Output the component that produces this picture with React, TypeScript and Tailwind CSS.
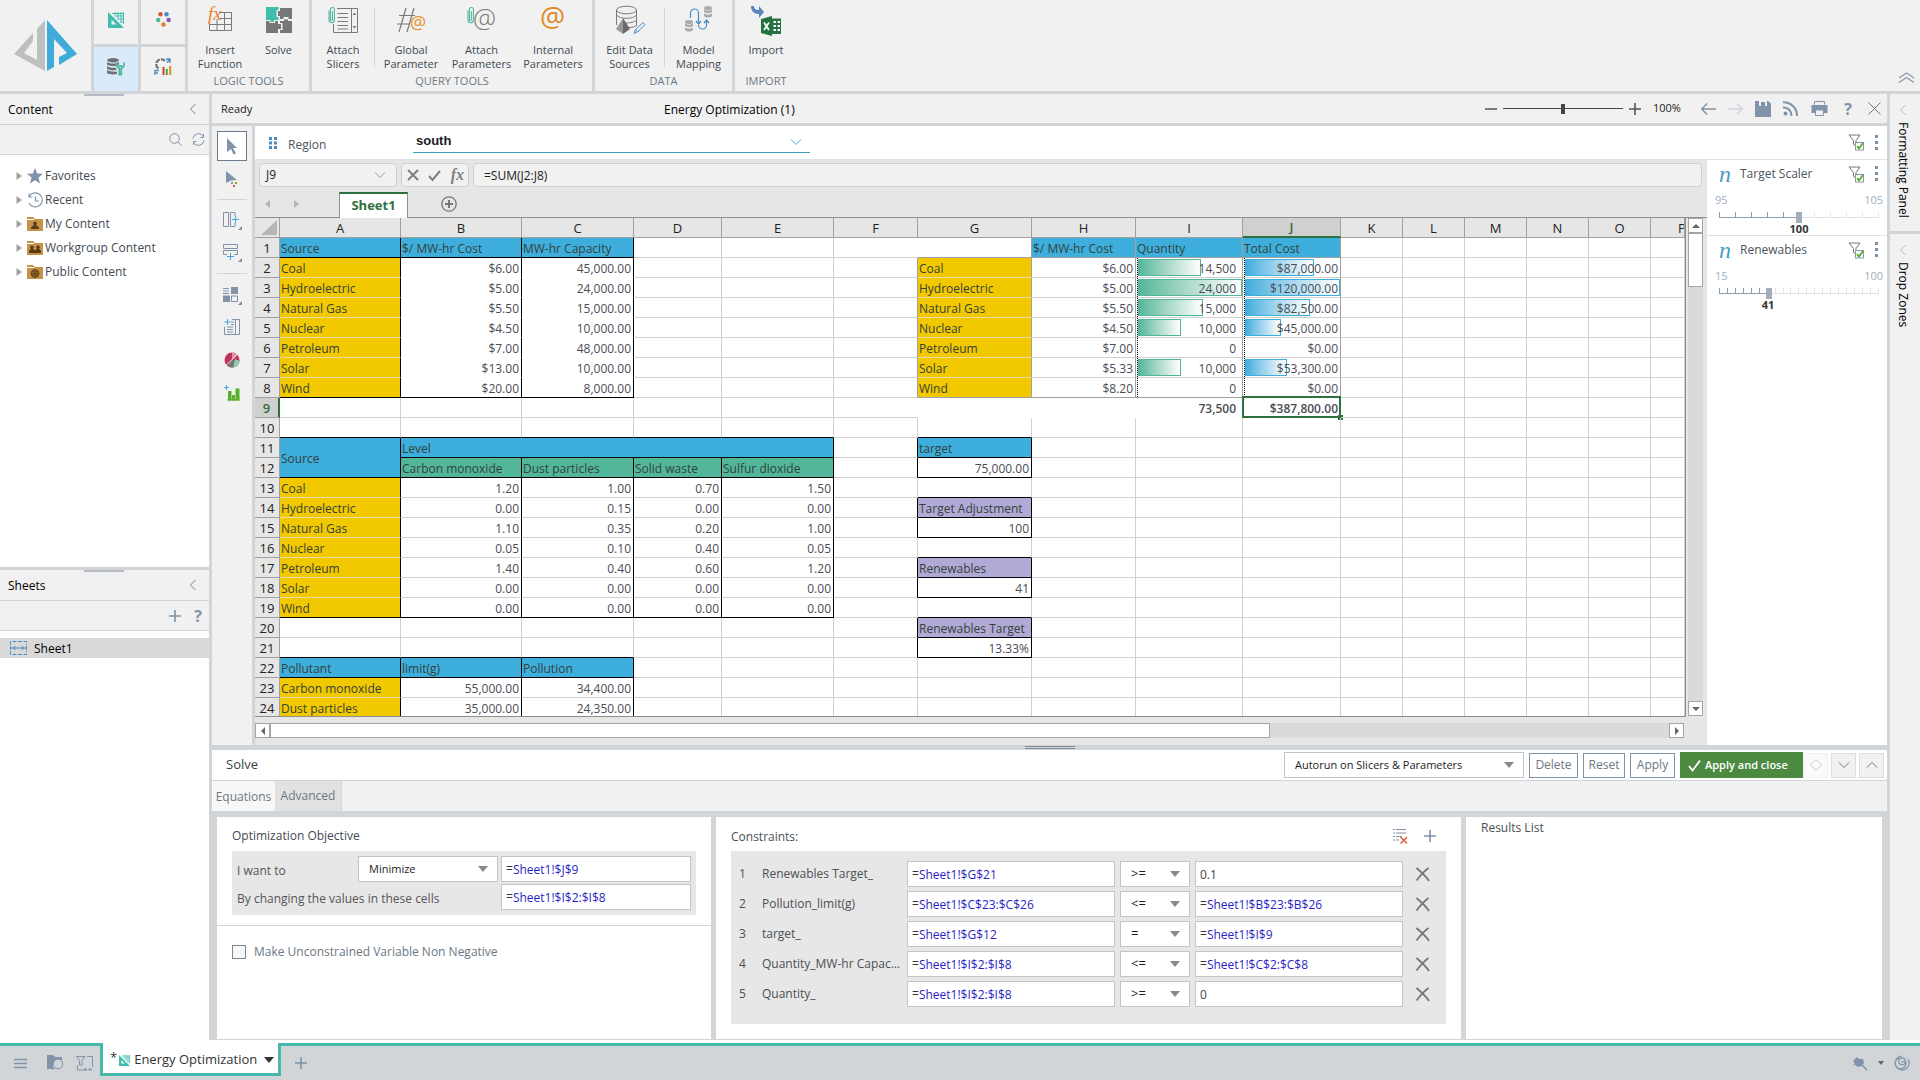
import React from "react";

const SEG = "font-['Open_Sans','Noto_Sans',sans-serif]";

/* ---------- icons ---------- */

type SvgProps = { w: number; h: number; vb?: string; className?: string; children: React.ReactNode };
function Svg({ w, h, vb, className, children }: SvgProps) {
  return (
    <svg width={w} height={h} viewBox={vb ?? `0 0 ${w} ${h}`} fill="none" className={`overflow-visible ${className ?? ""}`} aria-hidden="true">
      {children}
    </svg>
  );
}

const Logo = () => (
  <Svg w={64} h={52}>
    <path d="M31 0V51L0 34 19 13V21L10 33 23 40V9Z" fill="#bfbfbf" />
    <path d="M33 0 63 34 45 45V37L53 33 40 19V47L33 51Z" fill="#3fabdb" />
  </Svg>
);

const SetSquare = ({ s = 16 }: { s?: number }) => (
  <Svg w={s} h={s} vb="0 0 16 16">
    <path d="M0 0 16 16H0ZM3.5 7.500V12.500H8.500Z" fill="#41bdb0" fillRule="evenodd" />
    <path d="M4 1.500H16M6.500 4H16M9.500 7H16M12 10H16M7 0V3M10 0V7M13 0V10M15.500 0V12" stroke="#41bdb0" strokeWidth="1" />
  </Svg>
);

const Dots = () => (
  <Svg w={15} h={15}>
    <circle cx="4.500" cy="2.300" r="2.200" fill="#d9553a" />
    <circle cx="10.500" cy="2.300" r="2.200" fill="#4a8cc4" />
    <circle cx="2.200" cy="8" r="2.200" fill="#52b8a0" />
    <circle cx="12.600" cy="8" r="2.200" fill="#8655b5" />
    <circle cx="7.500" cy="12.500" r="2.200" fill="#d98327" />
  </Svg>
);

const DbWrench = () => (
  <Svg w={18} h={17}>
    <ellipse cx="6" cy="2.200" rx="6" ry="2.200" fill="#707070" />
    <path d="M0 4c3 2 9 2 12 0V6.500c-3 2-9 2-12 0ZM0 8c3 2 6 2 8.500 1.700l1 1.300V12c-3 .8-7 .5-9.500-1.200ZM0 12c2 1.500 7 2 10 1.500v2.500c-3 .8-8 .5-10-1Z" fill="#707070" />
    <path d="M9.500 4.500V8L12.300 10.500V16.500H14.300V10.500L17 8V4.500M11.500 8h3.600" stroke="#52b8a0" strokeWidth="1.800" />
  </Svg>
);

const ChartCycle = () => (
  <Svg w={18} h={17}>
    <path d="M4.500 10.500A5 5 0 1 1 11 3" stroke="#777" strokeWidth="2.200" strokeDasharray="5 1" />
    <path d="M12 1h4v4M16 1l-3 3.500M1 17v-4.500h4M1 15h3" stroke="#4a8cc4" strokeWidth="1.400" />
    <path d="M9.500 9v8" stroke="#c9452d" strokeWidth="2" />
    <path d="M12.800 11v6" stroke="#4aa84a" strokeWidth="2" />
    <path d="M16.200 8v9" stroke="#d98f27" strokeWidth="2" />
  </Svg>
);

const InsertFn = () => (
  <Svg w={28} h={28}>
    <path d="M13 6.500H25.500V24.500H3.500V15M3.500 18.500H25.500M14 12.500H25.500M11 13V24.500M18.500 6.500V24.500" stroke="#7a7a7a" />
    <text x="2" y="14" fontSize="19" fontStyle="italic" fontFamily="Liberation Serif, serif" fill="#e8842c">fx</text>
  </Svg>
);

const Puzzle = () => (
  <Svg w={26} h={26}>
    <path d="M14 1H26V12H22.500V10H17.500V12H14V9H12V4H14Z" fill="#777" />
    <path d="M0 14H3.500V16H9V14H12V17H15V22H12V26H0Z" fill="#777" />
    <path d="M14 14H18V12.500H22V14H26V26H14V23H16.500V16H14Z" fill="#777" />
    <path d="M0 0H12.500V3H10.500V10H12.500V13H8V15H4.500V13H0Z" fill="#41bdb0" />
  </Svg>
);

const Clip = () => (
  <path d="M1 4.500V14a2.700 2.700 0 0 0 5.400 0V3.500a2 2 0 0 0-4 0V13.500a1 1 0 0 0 2 0V5" stroke="#52b8a0" strokeWidth="1.100" />
);

const AttachSlicers = () => (
  <Svg w={30} h={28}>
    <path d="M9 2.500H29.500V26.500H5.500V18M23.500 2.500V26.500M9.500 7.500H20M9.500 11.500H20M9.500 15.500H20M9.500 19.500H20M9.500 23H20" stroke="#7a7a7a" />
    <path d="M24.500 9 26.500 6.500 28.500 9ZM24.500 20 26.500 22.500 28.500 20Z" fill="#7a7a7a" />
    <Clip />
  </Svg>
);

const HashAt = () => (
  <Svg w={30} h={28}>
    <path d="M10 2 3 26M18 2 11 26M3 9.500H19M1 18H14" stroke="#7a7a7a" strokeWidth="1.200" />
    <text x="14" y="23" fontSize="18" fontFamily="Open Sans, sans-serif" fill="#e8902c">@</text>
  </Svg>
);

const ClipAt = () => (
  <Svg w={30} h={28}>
    <text x="6" y="21" fontSize="26" fontFamily="Open Sans, sans-serif" fontWeight="300" fill="#7a7a7a">@</text>
    <Clip />
  </Svg>
);

const BigAt = () => (
  <Svg w={26} h={28}>
    <text x="0" y="21" fontSize="28" fontFamily="Open Sans, sans-serif" fill="#e08a1e">@</text>
  </Svg>
);

const EditSources = () => (
  <Svg w={30} h={30}>
    <ellipse cx="11.500" cy="5" rx="10" ry="3.800" stroke="#7a7a7a" />
    <path d="M1.500 5V20M21.500 5V21M1.500 10c3 4.500 17 4.500 20 0M10 18c5 0 10-1 11.500-3M13 22.500c4 0 7-.5 8.500-2" stroke="#7a7a7a" />
    <path d="M8 13 1 24l7 5Z" fill="#999" />
    <path d="M8 13v16l7-5Z" fill="#6a6a6a" />
    <path d="M19 28.500 20.500 24.500 28 17.500 30 19.500 22.500 27ZM20.500 24.500 22.500 27" stroke="#4a8cc4" />
  </Svg>
);

const Cyl = ({ x, y }: { x: number; y: number }) => (
  <g fill="#aaa" transform={`translate(${x} ${y})`}>
    <ellipse cx="4" cy="2" rx="4" ry="2" />
    <path d="M0 3.500c2 1.500 6 1.500 8 0V6c-2 1.500-6 1.500-8 0ZM0 7.500c2 1.500 6 1.500 8 0V10c-2 2-6 2-8 0Z" />
  </g>
);

const ModelMap = () => (
  <Svg w={28} h={28}>
    <Cyl x={19} y={0} />
    <Cyl x={0} y={14} />
    <path d="M5.500 12V7a4 4 0 0 1 8 0V19a4 4 0 0 0 8 0V14M11 15l2.500 3 2.500-3M19 17l2.500-3 2.500 3" stroke="#4a8cc4" strokeWidth="1.200" />
  </Svg>
);

const ExcelImport = () => (
  <Svg w={32} h={32}>
    <path d="M1 2c0 5 3 8 8 8v4l5-6-5-6v4C6 6 4 5 4 2Z" fill="#5b83bf" />
    <path d="M11 15 22 12V32L11 29Z" fill="#23713f" />
    <path d="M22 14.500H31V30H22Z" fill="#23713f" />
    <path d="M23.500 18H26M27.500 18H30M23.500 22H26M27.500 22H30M23.500 26H26M27.500 26H30" stroke="#fff" strokeWidth="1.800" />
    <path d="M14 18.500 19 26M19 18.500 14 26" stroke="#fff" strokeWidth="1.700" />
  </Svg>
);

const Chev = ({ d, s = 12, className = "" }: { d: "down" | "up" | "left"; s?: number; className?: string }) => (
  <Svg w={s} h={s} vb="0 0 12 12" className={className}>
    <path
      d={d === "down" ? "M1 3.500 6 8.500 11 3.500" : d === "up" ? "M1 8.500 6 3.500 11 8.500" : "M8.500 1 3.500 6 8.500 11"}
      stroke="currentColor"
    />
  </Svg>
);

const Caret = ({ className = "" }: { className?: string }) => (
  <Svg w={10} h={6} className={className}>
    <path d="M0 0H10L5 6Z" fill="currentColor" />
  </Svg>
);

const Plus = ({ s = 12 }: { s?: number }) => (
  <Svg w={s} h={s} vb="0 0 12 12">
    <path d="M6 0V12M0 6H12" stroke="currentColor" strokeWidth="1.600" />
  </Svg>
);

const FilterCheck = () => (
  <Svg w={17} h={17}>
    <path d="M1 1H12L8 6.500V12L5.500 10.500V6.500Z" stroke="#6d7780" />
    <rect x="7.500" y="8.500" width="8" height="7.500" fill="#fff" stroke="#8c9aa8" />
    <path d="M9 12 11 14.500 15 9" stroke="#53b024" strokeWidth="1.800" />
  </Svg>
);

const Kebab = () => (
  <Svg w={3} h={16}>
    <path d="M0 0H3V3H0ZM0 6H3V9H0ZM0 12H3V15H0Z" fill="#7d90a6" />
  </Svg>
);

const Folder = ({ kind }: { kind: "me" | "group" | "globe" }) => (
  <Svg w={16} h={14}>
    <path d="M0 0H6L8 2H16V14H0Z" fill="#c4924a" />
    <path d="M0 2.500H7" stroke="#fff" strokeWidth="1" />
    {kind === "me" && <path d="M8 4.500a2 2 0 0 1 1 3.600l3 2.400V12H4V10.500L7 8.100A2 2 0 0 1 8 4.500Z" fill="#5d3a14" />}
    {kind === "group" && (
      <path d="M5 4.500a1.800 1.800 0 0 1 1 3.300l2 1.700 2-1.700a1.800 1.800 0 1 1 2 0l2 2.200v2H2V10L4 7.800a1.800 1.800 0 0 1 1-3.300Z" fill="#5d3a14" />
    )}
    {kind === "globe" && (
      <>
        <circle cx="8" cy="8.500" r="4" fill="#9a6a2c" stroke="#5d3a14" strokeWidth=".8" />
        <path d="M4 8.500H12M8 4.500V12.500M5 6.200c2 1 4 1 6 0M5 10.800c2-1 4-1 6 0" stroke="#5d3a14" strokeWidth=".7" />
      </>
    )}
  </Svg>
);

const Star = () => (
  <Svg w={16} h={16}>
    <path d="M8 0 10.200 5.500 16 5.800 11.500 9.600 13 15.500 8 12.200 3 15.500 4.500 9.600 0 5.800 5.800 5.500Z" fill="#8093a8" />
  </Svg>
);

const Recent = () => (
  <Svg w={17} h={16}>
    <path d="M2.500 4A7 7 0 1 1 2 11M2 1.500V5H5.500M8.500 4.500V9H12" stroke="#8093a8" strokeWidth="1.200" />
  </Svg>
);

/* ---------- ribbon ---------- */

function RibbonButton({ icon, label, width }: { icon: React.ReactNode; label: string; width: string }) {
  return (
    <button className={`flex flex-col items-center pt-1 ${width}`}>
      <span className="flex h-8 items-center justify-center">{icon}</span>
      <span className="mt-[7px] w-min text-center text-[11px] leading-[14px] text-[#3f4a52]">{label}</span>
    </button>
  );
}

function RibbonGroup({ title, children, last }: { title: string; children: React.ReactNode; last?: boolean }) {
  return (
    <section className={`flex flex-col ${last ? "" : "border-r-[3px] border-[#d1d5d8]"}`}>
      <div className="flex h-[73px]">{children}</div>
      <h2 className="text-center text-[11px] leading-5 text-[#6b7883]">{title}</h2>
    </section>
  );
}

const Rule = () => <div className="mt-2 h-[59px] w-px bg-[#d1d5d8]" />;

function Ribbon() {
  return (
    <header className="flex h-[94px] border-b-[3px] border-[#d1d5d8] bg-[#f1f1f1]">
      <div className="flex w-[91px] items-center justify-center">
        <Logo />
      </div>
      <nav className="grid w-[97px] grid-cols-2 gap-[3px] bg-[#d1d5d8] px-[3px]" aria-label="Modules">
        <button className="flex items-center justify-center bg-[#f1f1f1] pb-1" aria-label="Formulate"><SetSquare /></button>
        <button className="flex items-center justify-center bg-[#f1f1f1] pb-1" aria-label="Discover"><Dots /></button>
        <button className="flex items-center justify-center bg-[#d9ebfb] pb-1" aria-label="Model"><DbWrench /></button>
        <button className="flex items-center justify-center bg-[#f1f1f1] pb-1" aria-label="Present"><ChartCycle /></button>
      </nav>
      <RibbonGroup title="LOGIC TOOLS">
        <RibbonButton icon={<InsertFn />} label="Insert Function" width="w-16" />
        <RibbonButton icon={<Puzzle />} label="Solve" width="mr-1 w-[53px]" />
      </RibbonGroup>
      <RibbonGroup title="QUERY TOOLS">
        <RibbonButton icon={<AttachSlicers />} label="Attach Slicers" width="w-[62px]" />
        <Rule />
        <RibbonButton icon={<HashAt />} label="Global Parameter" width="w-[72px]" />
        <RibbonButton icon={<ClipAt />} label="Attach Parameters" width="w-[69px]" />
        <RibbonButton icon={<BigAt />} label="Internal Parameters" width="mr-0.5 w-[74px]" />
      </RibbonGroup>
      <RibbonGroup title="DATA">
        <RibbonButton icon={<EditSources />} label="Edit&nbsp;Data Sources" width="w-[69px]" />
        <Rule />
        <RibbonButton icon={<ModelMap />} label="Model Mapping" width="w-[67px]" />
      </RibbonGroup>
      <RibbonGroup title="IMPORT" last>
        <RibbonButton icon={<ExcelImport />} label="Import" width="w-[62px]" />
      </RibbonGroup>
      <button className="ml-auto self-end px-1.5 pb-2 text-[#8c99a5]" aria-label="Collapse ribbon">
        <Svg w={15} h={11}>
          <path d="M0 6 7.500 1 15 6M0 10.500 7.500 5.500 15 10.500" stroke="currentColor" strokeWidth="1.300" />
        </Svg>
      </button>
    </header>
  );
}

/* ---------- left side ---------- */

function PanelHeader({ title }: { title: string }) {
  return (
    <div className="relative flex h-[31px] items-center justify-between border-b border-[#d1d5d8] bg-[#f1f1f1] pr-2.5 pl-2">
      <span className="absolute top-0 left-[84px] h-0.5 w-10 bg-[#b4bac0]" />
      <h2 className="pt-0.5 text-xs font-medium text-black">{title}</h2>
      <button aria-label={`Collapse ${title}`} className="text-[#7c868e]"><Chev d="left" /></button>
    </div>
  );
}

function TreeItem({ icon, label }: { icon: React.ReactNode; label: string }) {
  return (
    <li>
      <button className="flex h-6 items-center pl-4">
        <Svg w={6} h={8}><path d="M0.500 0 6 4 .5 8Z" fill="#a5a5a5" /></Svg>
        <span className="ml-[5px] flex w-[17px]">{icon}</span>
        <span className="ml-px text-xs text-[#3f4a52]">{label}</span>
      </button>
    </li>
  );
}

function LeftSide() {
  return (
    <aside className="flex w-[212px] shrink-0 flex-col border-r-[3px] border-[#d1d5d8] bg-white">
      <section className="flex flex-1 flex-col border-b-[3px] border-[#d1d5d8]">
        <PanelHeader title="Content" />
        <div className="flex h-[30px] items-center justify-end gap-2.5 border-b border-[#d1d5d8] bg-[#f1f1f1] pr-1 text-[#8093a8]">
          <button aria-label="Search">
            <Svg w={13} h={13}><circle cx="5.500" cy="5.500" r="4.800" stroke="currentColor" /><path d="M9 9 12.500 12.500" stroke="currentColor" /></Svg>
          </button>
          <button aria-label="Refresh">
            <Svg w={13} h={13}>
              <path d="M1 5.500A5.500 5.500 0 0 1 11.500 4M12 7.500A5.500 5.500 0 0 1 1.500 9M11.500 1V4.500H8.500M1.500 12V8.500H4.500" stroke="currentColor" />
            </Svg>
          </button>
        </div>
        <ul className="pt-[9px]">
          <TreeItem icon={<Star />} label="Favorites" />
          <TreeItem icon={<Recent />} label="Recent" />
          <TreeItem icon={<Folder kind="me" />} label="My Content" />
          <TreeItem icon={<Folder kind="group" />} label="Workgroup Content" />
          <TreeItem icon={<Folder kind="globe" />} label="Public Content" />
        </ul>
      </section>
      <section className="h-[470px]">
        <PanelHeader title="Sheets" />
        <div className="flex h-[30px] items-center justify-end gap-3 border-b border-[#d1d5d8] bg-[#f1f1f1] pr-1.5 text-[#8093a8]">
          <button aria-label="Add sheet"><Plus /></button>
          <button aria-label="Help" className="w-2.5 text-base leading-5 font-bold">?</button>
        </div>
        <button className="mt-[7px] flex h-5 w-full items-center bg-[#d9d9d9] pl-2.5">
          <Svg w={17} h={14}>
            <path d="M.5 4V.5H16.500V4M.5 10V13.500H16.500V10" stroke="#4a8cc4" strokeDasharray="4 1.500" />
            <path d="M1 7H16M5.500 5 3 7 5.500 9M11.500 5 14 7 11.500 9M.5 5V9M16.500 5V9" stroke="#4a8cc4" />
          </Svg>
          <span className="ml-[7px] pt-0.5 text-xs font-medium text-black">Sheet1</span>
        </button>
      </section>
    </aside>
  );
}

/* ---------- title bar ---------- */

function TitleBar() {
  return (
    <div className="flex h-8 items-center border-b-[3px] border-[#d1d5d8] bg-[#f1f1f1] pr-1.5 pl-[9px]">
      <span className="w-40 pt-px text-[11px] text-[#222]">Ready</span>
      <h1 className="flex-1 pt-0.5 pl-[283px] text-xs font-medium text-black">Energy Optimization (1)</h1>
      <div className="flex items-center text-[#555]">
        <button aria-label="Zoom out"><Svg w={12} h={2}><path d="M0 1H12" stroke="currentColor" strokeWidth="1.500" /></Svg></button>
        <input
          type="range"
          aria-label="Zoom"
          defaultValue={50}
          className="mx-1.5 h-3 w-[120px] appearance-none bg-[linear-gradient(#4a4a4a,#4a4a4a)] bg-[length:100%_1px] bg-center bg-no-repeat [&::-webkit-slider-thumb]:h-2.5 [&::-webkit-slider-thumb]:w-1 [&::-webkit-slider-thumb]:appearance-none [&::-webkit-slider-thumb]:bg-[#444]"
        />
        <button aria-label="Zoom in"><Plus /></button>
        <span className="ml-3 w-12 text-[11px] text-[#222]">100%</span>
      </div>
      <div className="flex items-center gap-3 text-[#8093a8]">
        <button aria-label="Undo">
          <Svg w={15} h={12}><path d="M6 .5.800 6 6 11.500M1 6H15" stroke="currentColor" strokeWidth="1.500" /></Svg>
        </button>
        <button aria-label="Redo" className="text-[#cfd6dd]">
          <Svg w={15} h={12}><path d="M9 .5 14.200 6 9 11.500M14 6H0" stroke="currentColor" strokeWidth="1.500" /></Svg>
        </button>
        <button aria-label="Save">
          <Svg w={16} h={16}>
            <path d="M0 0H13L16 2.500V16H0Z" fill="currentColor" />
            <path d="M4 0V5H6V1H10V5H12V0Z" fill="#f1f1f1" />
          </Svg>
        </button>
        <button aria-label="Publish">
          <Svg w={16} h={15}>
            <circle cx="2.500" cy="12.500" r="2" fill="currentColor" />
            <path d="M0 6.500A8 8 0 0 1 8.500 15M0 1.200A13.500 13.500 0 0 1 14 15" stroke="currentColor" strokeWidth="2" />
          </Svg>
        </button>
        <button aria-label="Print">
          <Svg w={17} h={15}>
            <path d="M3.500 3.500V.5H13.500V3.500" stroke="currentColor" />
            <path d="M.5 4H16.500V12H.5Z" fill="currentColor" />
            <path d="M4.500 9H12.500V14.500H4.500Z" fill="#f1f1f1" stroke="currentColor" />
          </Svg>
        </button>
        <button aria-label="Help" className="w-4 text-base leading-5 font-bold">?</button>
        <button aria-label="Close" className="text-[#6d7780]">
          <Svg w={13} h={13}><path d="M.5.500 12.500 12.500M12.500.500.500 12.500" stroke="currentColor" /></Svg>
        </button>
      </div>
    </div>
  );
}

/* ---------- tool strip ---------- */

const Corner = () => <path d="M19 14V18H15Z" fill="#7d90a6" />;

function ToolStrip() {
  return (
    <div className="flex w-[43px] shrink-0 flex-col items-center border-r-[3px] border-[#d1d5d8] bg-[#f1f1f1] pt-[5px] text-[#8093a8]">
      <button aria-label="Select" className="flex h-[30px] w-[30px] items-center justify-center border border-[#6b7b8a] bg-white">
        <Svg w={10} h={17}><path d="M0 0 10 10H6L9 15.500 6.500 16.500 4 11 0 14Z" fill="currentColor" /></Svg>
      </button>
      <button aria-label="Interact" className="flex h-9 items-center">
        <Svg w={12} h={17}>
          <path d="M0 0 11 9 5 9.500 0 12Z" fill="currentColor" />
          <path d="M5 11h2v2H5Z" fill="#52b8a0" /><path d="M9 11h2v2H9Z" fill="#d98327" />
          <path d="M7 14h2v2H7Z" fill="#d9553a" />
        </Svg>
      </button>
      <div className="my-0.5 h-px w-[30px] bg-[#cfd3d6]" />
      <button aria-label="Insert column" className="flex h-[34px] items-center pt-1">
        <Svg w={19} h={18}>
          <path d="M.5.500H5.500V14.500H.5ZM12 .5H7.500V14.500H12V11M12 .5V4" stroke="currentColor" />
          <path d="M12.500 4V11M9 7.500H16" stroke="#3fabdb" />
          <Corner />
        </Svg>
      </button>
      <button aria-label="Insert row" className="flex h-[33px] items-center">
        <Svg w={19} h={18}>
          <path d="M.5.500H14.500V4.500H.5ZM4 10.500H.5V6.500H14.500V10.500H11" stroke="currentColor" />
          <path d="M7.500 9V16M4 12.500H11" stroke="#3fabdb" />
          <Corner />
        </Svg>
      </button>
      <div className="mt-1 mb-0.5 h-px w-[30px] bg-[#cfd3d6]" />
      <button aria-label="Blocks" className="flex h-[35px] items-center pt-1">
        <Svg w={19} h={18}>
          <path d="M0 1.500H6M0 4H6M0 6.500H6" stroke="currentColor" />
          <path d="M8 0H15V7H8ZM0 8.500H7V15H0Z" fill="currentColor" />
          <path d="M8.500 9H14.500V14.500H8.500Z" stroke="currentColor" />
          <Corner />
        </Svg>
      </button>
      <button aria-label="Add slicer" className="flex h-8 items-center">
        <Svg w={16} h={16}>
          <path d="M8 .5H15.500V15.500H.5V8M11.500.500V15.500M3 8H9M3 10.500H9M3 13H9M7 3H10M7 5.500H10" stroke="currentColor" />
          <path d="M3.500 0V6M.5 3H6.500" stroke="#3fabdb" />
        </Svg>
      </button>
      <button aria-label="Pie" className="flex h-[33px] items-center">
        <Svg w={16} h={16}>
          <circle cx="8" cy="8" r="7.500" fill="#c2315c" />
          <path d="M8 8 15.500 8A7.500 7.500 0 0 1 3 13.500Z" fill="#777" />
          <path d="M8 8V.5A7.500 7.500 0 0 1 13.500 3Z" fill="#e58da6" />
          <path d="M1 14.500 14 1.500" stroke="#f1f1f1" />
          <path d="M11 7 15.500 9 13 15 9.500 14.500Z" fill="#8fd0b4" />
        </Svg>
      </button>
      <button aria-label="Chart" className="flex h-[34px] items-center">
        <Svg w={16} h={16}>
          <path d="M4 6H7.500V15.500H4ZM8 10H11V15.500H8ZM11.500 3.500H15.500V15.500H11.500Z" fill="#57b02a" />
          <path d="M3.500 14.800H15.500" stroke="#57b02a" strokeWidth="1.500" />
          <path d="M2.500 0V5M0 2.500H5" stroke="#3fabdb" />
        </Svg>
      </button>
    </div>
  );
}

/* ---------- spreadsheet ---------- */

type Cell = {
  t?: string; bg?: string; r?: string; b?: string; right?: boolean; bold?: boolean; cs?: number; rs?: number;
  bar?: number; color?: "green" | "blue"; skip?: boolean; indent?: boolean;
};

const COLS = "ABCDEFGHIJKLMNOP".split("");
const COLW = ["w-[121px]", "w-[121px]", "w-28", "w-[88px]", "w-28", "w-[84px]", "w-[114px]", "w-[104px]", "w-[107px]", "w-[98px]", "w-[62px]", "w-[62px]", "w-[62px]", "w-[62px]", "w-[62px]", ""];
const BLUE = "bg-[#3eaedd]";
const GOLD = "bg-[#f2c800]";
const TEAL = "bg-[#52b79a]";
const LILAC = "bg-[#b2aad6]";
const BK_R = "border-r-black";
const BK_B = "border-b-black";
const GR_R = "border-r-[#a0a0a0]";
const GR_B = "border-b-[#a0a0a0]";
const NO_R = "border-r-white";
const NO_B = "border-b-white";
const SOFT_B = "border-b-[#e3dcb0]";

const cells: Record<string, Cell> = {};
function put(cols: string, r1: number, r2: number, props: Cell) {
  for (const c of cols) for (let r = r1; r <= r2; r++) cells[c + r] = { ...cells[c + r], ...props };
}
function fill(col: string, row: number, values: string[], props: Cell = {}) {
  values.forEach((t, i) => put(col, row + i, row + i, { t, ...props }));
}

const SOURCES = ["Coal", "Hydroelectric", "Natural Gas", "Nuclear", "Petroleum", "Solar", "Wind"];

put("ABC", 1, 1, { bg: BLUE, r: BK_R, b: BK_B });
put("A", 2, 8, { bg: GOLD, r: BK_R, b: SOFT_B });
put("BC", 2, 8, { r: BK_R, b: NO_B, right: true });
put("ABC", 8, 8, { b: BK_B });
fill("A", 1, ["Source", ...SOURCES]);
fill("B", 1, ["$/ MW-hr Cost", "$6.00", "$5.00", "$5.50", "$4.50", "$7.00", "$13.00", "$20.00"]);
fill("C", 1, ["MW-hr Capacity", "45,000.00", "24,000.00", "15,000.00", "10,000.00", "48,000.00", "10,000.00", "8,000.00"]);

put("ABCDE", 10, 10, { b: BK_B });
put("A", 11, 11, { t: "Source", bg: BLUE, rs: 2, r: BK_R, b: BK_B });
put("A", 12, 12, { skip: true });
put("B", 11, 11, { t: "Level", bg: BLUE, cs: 4, r: BK_R, b: BK_B });
put("CDE", 11, 11, { skip: true });
put("BCDE", 12, 12, { bg: TEAL, r: BK_R, b: BK_B });
put("A", 13, 19, { bg: GOLD, r: BK_R, b: SOFT_B });
put("BCDE", 13, 19, { r: BK_R, right: true });
put("ABCDE", 19, 19, { b: BK_B });
fill("A", 13, SOURCES);
fill("B", 12, ["Carbon monoxide", "1.20", "0.00", "1.10", "0.05", "1.40", "0.00", "0.00"]);
fill("C", 12, ["Dust particles", "1.00", "0.15", "0.35", "0.10", "0.40", "0.00", "0.00"]);
fill("D", 12, ["Solid waste", "0.70", "0.00", "0.20", "0.40", "0.60", "0.00", "0.00"]);
fill("E", 12, ["Sulfur dioxide", "1.50", "0.00", "1.00", "0.05", "1.20", "0.00", "0.00"]);

put("ABC", 21, 21, { b: BK_B });
put("ABC", 22, 22, { bg: BLUE, r: BK_R, b: BK_B });
put("A", 23, 24, { bg: GOLD, r: BK_R, b: SOFT_B });
put("BC", 23, 24, { r: BK_R, right: true });
fill("A", 22, ["Pollutant", "Carbon monoxide", "Dust particles"]);
fill("B", 22, ["limit(g)", "55,000.00", "35,000.00"]);
fill("C", 22, ["Pollution", "34,400.00", "24,350.00"]);

put("F", 1, 1, { r: NO_R });
put("F", 2, 8, { r: GR_R });
put("F", 9, 9, { r: NO_R });
put("G", 1, 1, { r: GR_R, b: GR_B });
put("G", 2, 8, { bg: GOLD, r: GR_R, b: SOFT_B });
put("HIJ", 1, 1, { bg: BLUE, r: GR_R, b: GR_B });
put("HIJ", 2, 8, { r: GR_R, right: true });
put("GHI", 8, 8, { b: GR_B });
put("GHI", 9, 9, { r: NO_R, b: NO_B });
fill("G", 2, SOURCES);
fill("H", 1, ["$/ MW-hr Cost", "$6.00", "$5.00", "$5.50", "$4.50", "$7.00", "$5.33", "$8.20"]);
fill("I", 1, ["Quantity"]);
fill("J", 1, ["Total Cost"]);
fill("I", 2, ["14,500", "24,000", "15,000", "10,000", "0", "10,000", "0"], { indent: true, color: "green" });
fill("J", 2, ["$87,000.00", "$120,000.00", "$82,500.00", "$45,000.00", "$0.00", "$53,300.00", "$0.00"], { color: "blue" });
[14.5, 24, 15, 10, 0, 10, 0].forEach((v, i) => put("I", i + 2, i + 2, { bar: (v / 24) * 100 }));
[87, 120, 82.5, 45, 0, 53.3, 0].forEach((v, i) => put("J", i + 2, i + 2, { bar: (v / 120) * 100 }));
put("I", 9, 9, { t: "73,500", bold: true, right: true, indent: true });
put("J", 9, 9, { t: "$387,800.00", bold: true, right: true });

[[11, BLUE, "target", "75,000.00"], [14, LILAC, "Target Adjustment", "100"], [17, LILAC, "Renewables", "41"], [20, LILAC, "Renewables Target", "13.33%"]].forEach(
  ([row, bg, name, val]) => {
    const r = row as number;
    put("F", r, r + 1, { r: BK_R });
    put("G", r - 1, r - 1, { b: BK_B });
    put("G", r, r, { t: name as string, bg: bg as string, r: BK_R, b: BK_B });
    put("G", r + 1, r + 1, { t: val as string, r: BK_R, b: BK_B, right: true });
  },
);

function CellView({ id }: { id: string }) {
  const c = cells[id] ?? {};
  if (c.skip) return null;
  return (
    <td
      colSpan={c.cs}
      rowSpan={c.rs}
      className={`relative h-5 border-r border-b px-0 pt-0.5 pb-0 whitespace-nowrap ${c.bg ?? ""} ${c.r ?? "border-r-[#d0d0d0]"} ${c.b ?? "border-b-[#d0d0d0]"} ${c.right ? "text-right" : "text-left"} ${c.bold ? "font-semibold text-[#2d3046]" : ""} ${c.indent ? "pr-1.5" : "pr-0.5"} ${c.bg ? "pl-px text-[#33423a]" : "text-[#4a4d55]"}`}
    >
      {c.color && (
        <span className="absolute inset-y-0 right-0 left-px border-l border-dotted border-black py-px">
          {c.bar ? (
            <span
              className={`block h-[17px] border ${c.color === "green" ? "border-[#52b79a] bg-linear-to-r from-[#52b79a] to-white" : "border-[#3eaedd] bg-linear-to-r from-[#3eaedd] to-white"}`}
              style={{ width: `${c.bar}%` }}
            />
          ) : null}
        </span>
      )}
      <span className="relative">{c.t}</span>
      {id === "J9" && (
        <span className="absolute -inset-x-px -top-0.5 -bottom-px border-2 border-[#2e7040]">
          <span className="absolute -right-1 -bottom-1 h-[5px] w-[5px] bg-[#2e7040]" />
        </span>
      )}
    </td>
  );
}

function Grid() {
  return (
    <div className="min-h-0 flex-1 overflow-hidden border-r border-b border-[#8f8f8f] bg-white">
      <table className="w-full table-fixed border-separate border-spacing-0 text-xs leading-[17px]">
        <colgroup>
          <col className="w-[25px]" />
          {COLS.map((c, i) => <col key={c} className={COLW[i]} />)}
        </colgroup>
        <thead>
          <tr className="h-5 bg-[#e6e6e6] text-[13px] text-[#222]">
            <th className="border-r border-b border-[#a0a0a0] p-0">
              <Svg w={16} h={15} className="mr-0.5 ml-auto"><path d="M16 0V15H0Z" fill="#b5b5b5" /></Svg>
            </th>
            {COLS.map((c) => (
              <th
                key={c}
                scope="col"
                className={`h-5 overflow-hidden p-0 leading-[18px] ${c === "J" ? "border-r border-b-2 border-r-[#a0a0a0] border-b-[#2e7040] bg-[#d0d0d0] font-semibold text-[#2e7040]" : "border-r border-b border-[#a0a0a0] font-normal"}`}
              >
                {c === "P" ? <span className="block w-[62px]">P</span> : c}
              </th>
            ))}
          </tr>
        </thead>
        <tbody>
          {Array.from({ length: 24 }, (_, i) => i + 1).map((r) => (
            <tr key={r} className="h-5">
              <th
                scope="row"
                className={`h-5 p-0 text-center text-[13px] leading-[18px] ${r === 9 ? "border-r-2 border-b border-r-[#2e7040] border-b-[#a0a0a0] bg-[#d0d0d0] font-semibold text-[#2e7040]" : "border-r border-b border-[#a0a0a0] bg-[#e6e6e6] font-normal text-[#222]"}`}
              >
                {r}
              </th>
              {COLS.map((c) => <CellView key={c} id={c + r} />)}
            </tr>
          ))}
        </tbody>
      </table>
    </div>
  );
}

function Arrow({ d, label, className }: { d: string; label: string; className?: string }) {
  return (
    <button aria-label={label} className={`flex h-[15px] w-[15px] shrink-0 items-center justify-center border border-[#a5a5a5] bg-white ${className ?? ""}`}>
      <Svg w={8} h={8}><path d={d} fill="#666" /></Svg>
    </button>
  );
}

function Sheet() {
  return (
    <div className="flex min-w-0 flex-1 flex-col bg-[#e6e6e6] pb-[7px]">
      <div className="flex h-[27px] items-end gap-1 pr-[5px] pl-1 text-[#222]">
        <div className="flex h-6 w-[138px] items-center justify-between rounded-sm border border-[#d0d0d0] bg-[#f1f1f1] pr-2.5 pl-1.5 text-xs">
          J9
          <Chev d="down" className="text-[#999]" />
        </div>
        <div className="flex h-6 w-[68px] items-center justify-between rounded-sm border border-[#d0d0d0] bg-[#f1f1f1] px-1 text-[#808080]">
          <button aria-label="Cancel" className="pl-0.5"><Svg w={10} h={10}><path d="M0 0 10 10M10 0 0 10" stroke="currentColor" strokeWidth="2" /></Svg></button>
          <button aria-label="Enter"><Svg w={13} h={11}><path d="M1 6 4.500 10 12 1" stroke="currentColor" strokeWidth="2" /></Svg></button>
          <button aria-label="Function" className="font-['Liberation_Serif',serif] text-base leading-5 font-bold italic">fx</button>
        </div>
        <input
          aria-label="Formula"
          defaultValue="=SUM(J2:J8)"
          className="h-6 min-w-0 flex-1 rounded-sm border border-[#d0d0d0] bg-[#f1f1f1] px-2.5 text-xs"
        />
      </div>
      <div className="flex h-[31px] items-end border-b border-[#8f8f8f]">
        <div className="flex h-[26px] w-[84px] items-center gap-6 pl-2.5">
          <Svg w={5} h={8}><path d="M5 0V8L0 4Z" fill="#b5b5b5" /></Svg>
          <Svg w={5} h={8}><path d="M0 0V8L5 4Z" fill="#b5b5b5" /></Svg>
        </div>
        <button className="-mb-px h-[26px] w-[69px] border-x border-t-2 border-x-[#8f8f8f] border-t-[#2e7040] bg-white pb-0.5 text-[13px] leading-5 font-bold text-[#2e7040]">
          Sheet1
        </button>
        <button aria-label="New sheet" className="ml-[33px] pb-[5px] text-[#777]">
          <Svg w={16} h={16}><circle cx="8" cy="8" r="7.200" stroke="currentColor" strokeWidth="1.300" /><path d="M8 4V12M4 8H12" stroke="currentColor" strokeWidth="2" /></Svg>
        </button>
      </div>
      <div className="flex min-h-0 flex-1">
        <Grid />
        <div className="mr-1 mb-px ml-0.5 flex w-[15px] flex-col bg-[#dadada]">
          <Arrow label="Scroll up" d="M0 6 4 2 8 6Z" />
          <div className="h-[54px] border border-[#a5a5a5] bg-white" />
          <Arrow label="Scroll down" d="M0 2 4 6 8 2Z" className="mt-auto" />
        </div>
      </div>
      <div className="mt-1.5 mr-[23px] flex bg-[#dadada]">
        <Arrow label="Scroll left" d="M6 0 2 4 6 8Z" />
        <div className="h-[15px] w-[70%] border border-[#a5a5a5] bg-white" />
        <Arrow label="Scroll right" d="M2 0 6 4 2 8Z" className="ml-auto" />
      </div>
    </div>
  );
}

/* ---------- slicers ---------- */

function ParamSlider({ name, min, max, value, ticks, trail }: { name: string; min: number; max: number; value: number; ticks: number; trail?: boolean }) {
  const pct = ((value - min) / (max - min)) * 100;
  return (
    <section className={`h-[76px] pr-2 pl-3 ${trail ? "" : "border-b border-[#dfe2e5]"}`}>
      <div className="flex h-7 items-center">
        <span className="w-[21px] font-['Liberation_Serif',serif] text-2xl leading-5 text-[#4a9cc4] italic">n</span>
        <h3 className="flex-1 text-xs text-[#4a5560]">{name}</h3>
        <FilterCheck />
        <button aria-label={`${name} menu`} className="ml-2.5 pr-px"><Kebab /></button>
      </div>
      <div className="-mx-1 flex justify-between text-[11px] leading-6 text-[#a0afc0]">
        <span>{min}</span>
        <span>{max}</span>
      </div>
      <div className="relative h-[11px]">
        <div className="flex h-[5px] justify-between">
          {Array.from({ length: ticks }, (_, i) => (
            <span key={i} className={`w-px ${(i / (ticks - 1)) * 100 < pct ? "bg-[#8d9db0]" : "bg-[#dde2e8]"}`} />
          ))}
        </div>
        <div className="h-px bg-[#dde2e8]">
          <div className="h-px bg-[#8d9db0]" style={{ width: `${pct}%` }} />
        </div>
        <input
          type="range"
          aria-label={name}
          min={min}
          max={max}
          defaultValue={value}
          className="absolute inset-x-0 -top-px h-3 w-full appearance-none bg-transparent [&::-webkit-slider-thumb]:h-[11px] [&::-webkit-slider-thumb]:w-1.5 [&::-webkit-slider-thumb]:appearance-none [&::-webkit-slider-thumb]:bg-[#a3aebb]"
        />
      </div>
      <div style={{ marginLeft: `${pct}%` }}>
        <span className="block w-max -translate-x-1/2 text-[11px] leading-3 font-bold text-[#333]">{value}</span>
      </div>
    </section>
  );
}

/* ---------- solver ---------- */

function Field({ label, value, width }: { label: string; value: string; width: string }) {
  const formula = value.startsWith("=");
  return (
    <div className={`flex h-[26px] items-center border border-[#c2c5c8] bg-white pl-1 text-xs ${width}`}>
      {formula && <span className="text-[#333]">=</span>}
      <input
        aria-label={label}
        defaultValue={formula ? value.slice(1) : value}
        className={`h-full min-w-0 flex-1 bg-transparent outline-none ${formula ? "text-[#2a1fc4]" : "text-[#444]"}`}
      />
    </div>
  );
}

function Select({ label, value, options, className }: { label: string; value: string; options: string[]; className: string }) {
  return (
    <div className={`relative h-[26px] ${className}`}>
      <select
        aria-label={label}
        defaultValue={value}
        className="h-full w-full appearance-none border border-[#c2c5c8] bg-white pl-2.5 text-[#1c1c1c]"
      >
        {options.map((o) => <option key={o}>{o}</option>)}
      </select>
      <Caret className="pointer-events-none absolute top-2.5 right-2.5 text-[#8a8a8a]" />
    </div>
  );
}

const CONSTRAINTS = [
  ["Renewables Target_", "=Sheet1!$G$21", ">=", "0.1"],
  ["Pollution_limit(g)", "=Sheet1!$C$23:$C$26", "<=", "=Sheet1!$B$23:$B$26"],
  ["target_", "=Sheet1!$G$12", "=", "=Sheet1!$I$9"],
  ["Quantity_MW-hr Capacity", "=Sheet1!$I$2:$I$8", "<=", "=Sheet1!$C$2:$C$8"],
  ["Quantity_", "=Sheet1!$I$2:$I$8", ">=", "0"],
];

const OUTLINE = "h-[25px] border border-[#8093a8] bg-white text-xs text-[#6b7883]";

function Solver() {
  return (
    <section className="flex shrink-0 flex-col border-t-[5px] border-[#d1d5d8] bg-white">
      <div className="relative flex h-[31px] items-center border-b border-[#d1d5d8] pr-[3px] pl-3.5">
        <span className="absolute -top-1 left-1/2 h-[3px] w-[50px] -translate-x-1/2 border-y border-[#7c8a97]" />
        <h2 className="flex-1 text-[13px] text-[#3a3f44]">Solve</h2>
        <Select label="Run mode" value="Autorun on Slicers & Parameters" options={["Autorun on Slicers & Parameters", "Manual"]} className="w-[240px] text-[11px]" />
        <button className={`ml-[5px] w-[49px] ${OUTLINE}`}>Delete</button>
        <button className={`ml-[5px] w-[42px] ${OUTLINE}`}>Reset</button>
        <button className={`ml-[5px] w-[45px] ${OUTLINE}`}>Apply</button>
        <button className="ml-[5px] flex h-[26px] w-[123px] items-center gap-1 bg-[#4c8a41] pl-2 text-[11px] font-semibold text-white">
          <Svg w={13} h={13}><path d="M1 7 4.500 11.500 12 1.500" stroke="currentColor" strokeWidth="1.800" /></Svg>
          Apply and close
        </button>
        <button aria-label="Status" className="flex h-[25px] w-[25px] items-center justify-center border border-[#f0f0f0] bg-[#fafafa] text-[#c5c9cd]">
          <Svg w={12} h={12}><path d="M6 .5 11.500 6 6 11.500.500 6Z" stroke="currentColor" /></Svg>
        </button>
        <button aria-label="Next" className="ml-[3px] flex h-[25px] w-[25px] items-center justify-center border border-[#dcdfe1] bg-[#f1f1f1] text-[#6b7883]"><Chev d="down" /></button>
        <button aria-label="Previous" className="ml-[3px] flex h-[25px] w-[25px] items-center justify-center border border-[#dcdfe1] bg-[#f1f1f1] text-[#6b7883]"><Chev d="up" /></button>
      </div>
      <div className="flex h-[30px] bg-[#f1f1f1] text-xs text-[#6b7883]" role="tablist">
        <button role="tab" aria-selected="true" className="w-[63px] bg-[#f7f7f7] pt-0.5">Equations</button>
        <button role="tab" aria-selected="false" className="w-[67px] border-r border-[#d9d9d9] bg-[#e1e1e1]">Advanced</button>
      </div>
      <div className="grid h-[229px] grid-cols-[494fr_745fr_416fr] gap-[5px] border-b border-[#d1d5d8] bg-[#d1d5d8] px-[5px] pt-1.5">
        <div className="bg-white text-xs text-[#3f4a52]">
          <div className="border-b border-[#d1d5d8] px-[15px] pb-2.5">
            <h3 className="pt-1.5 pb-0.5 leading-[26px]">Optimization Objective</h3>
            <div className="flex flex-col gap-0.5 bg-[#e7e7e7] py-[5px] pr-[5px] pl-[5px] font-medium text-[#555]">
              <div className="flex items-center gap-[3px]">
                <span className="flex-1 pt-1">I want to</span>
                <Select label="Goal" value="Minimize" options={["Minimize", "Maximize"]} className="w-[140px] text-[11px]" />
                <Field label="Objective cell" value="=Sheet1!$J$9" width="w-[190px]" />
              </div>
              <div className="flex items-center">
                <span className="flex-1 pt-1">By changing the values in these cells</span>
                <Field label="Variable cells" value="=Sheet1!$I$2:$I$8" width="w-[190px]" />
              </div>
            </div>
          </div>
          <label className="mt-[18px] ml-[15px] flex items-center gap-2 text-[#6b7883]">
            <input type="checkbox" className="h-3.5 w-3.5 appearance-none border border-[#7c8a97] bg-[#f7f7f7]" />
            Make Unconstrained Variable Non Negative
          </label>
        </div>
        <div className="bg-white px-[15px] text-xs text-[#4a5055]">
          <div className="flex h-[34px] items-center pt-1">
            <h3 className="flex-1 pt-px">Constraints:</h3>
            <button aria-label="Clear constraints">
              <Svg w={15} h={16}>
                <path d="M0 1.500H2M3 1.500H13M0 5H2M3 5H13M0 8.500H2M3 8.500H9M0 12H2M3 12H6" stroke="#7d90a6" />
                <path d="M7.500 9 14 15.500M14 9 7.500 15.500" stroke="#e0522d" strokeWidth="1.300" />
              </Svg>
            </button>
            <button aria-label="Add constraint" className="mr-2.5 ml-4 text-[#7d90a6]"><Plus /></button>
          </div>
          <div className="flex h-[173px] flex-col gap-1 bg-[#e7e7e7] pt-2.5 pl-2">
            {CONSTRAINTS.map(([name, left, op, right], i) => (
              <div key={name} className="flex items-center">
                <span className="w-[23px]">{i + 1}</span>
                <span className="w-[145px] truncate pr-1.5">{name}</span>
                <Field label={`${name} left`} value={left} width="flex-1" />
                <Select label={`${name} operator`} value={op} options={[">=", "<=", "="]} className="mx-[5px] w-[70px] text-[13px]" />
                <Field label={`${name} right`} value={right} width="flex-1" />
                <button aria-label={`Remove ${name}`} className="pr-4 pl-3">
                  <Svg w={15} h={15}><path d="M1.500 1C5 4 11 9 14 14M13.500 1C9 4 5 9 1.500 13.500" stroke="#777" strokeWidth="1.800" /></Svg>
                </button>
              </div>
            ))}
          </div>
        </div>
        <div className="bg-white">
          <h3 className="px-[15px] text-xs leading-[22px] text-[#4a5055]">Results List</h3>
        </div>
      </div>
    </section>
  );
}

/* ---------- right rail and footer ---------- */

function RailButton({ label, className }: { label: string; className: string }) {
  return (
    <button className={`flex w-full flex-col items-center gap-1.5 pt-2.5 pr-1 ${className}`}>
      <Chev d="left" className="text-[#b5bcc2]" />
      <span className="text-xs font-medium text-black [writing-mode:vertical-rl]">{label}</span>
    </button>
  );
}

function Footer() {
  return (
    <footer className="mt-[3px] flex h-[37px] items-stretch bg-[#d1d5d8] text-[#8093a8]">
      <div className="flex w-[100px] items-center gap-4 border-t-[3px] border-[#46b8ac] pl-3.5">
        <button aria-label="Menu"><Svg w={13} h={11}><path d="M0 1.500H13M0 5.500H13M0 9.500H13" stroke="currentColor" strokeWidth="1.600" /></Svg></button>
        <button aria-label="Browse" className="ml-1">
          <Svg w={17} h={16}>
            <path d="M0 0H6L8 2H15V5H10L6 9V14H0Z" fill="currentColor" />
            <circle cx="11" cy="9" r="4.800" stroke="currentColor" fill="#d1d5d8" /><path d="M8 12 5.500 15" stroke="currentColor" />
          </Svg>
        </button>
        <button aria-label="Filters" className="-ml-1">
          <Svg w={17} h={15}>
            <path d="M.5.500H9L6 4.500V9H3.500V4.500ZM11 .5H16.500V11M1.500 9V14H8" stroke="currentColor" /><path d="M8 13.500H16.500" stroke="currentColor" strokeDasharray="3 1.500" strokeWidth="2" />
          </Svg>
        </button>
      </div>
      <button className="mb-1 flex w-[181px] items-center border-x-[3px] border-b-[3px] border-[#46b8ac] bg-white pt-1 pl-[7px] text-[13px] text-[#333]">
        <span className="pb-1">*</span>
        <span className="mx-0.5"><SetSquare s={11} /></span>
        <span className="ml-0.5">Energy Optimization</span>
        <Caret className="mr-1 ml-auto text-[#333]" />
      </button>
      <div className="flex flex-1 items-center border-t-[3px] border-[#46b8ac] pr-2.5 pl-3.5">
        <button aria-label="New tab"><Plus /></button>
        <button aria-label="Pin" className="ml-auto">
          <Svg w={16} h={15}>
            <path d="M1 5 5 1 7 3 11 3 12 7 8 11 4 10 3 7Z" fill="currentColor" />
            <path d="M9 8 15 14M2 9 5 6" stroke="currentColor" strokeWidth="1.600" />
          </Svg>
        </button>
        <button aria-label="Pin options" className="ml-2.5"><Svg w={6} h={4}><path d="M0 0H6L3 4Z" fill="#666" /></Svg></button>
        <button aria-label="Status" className="ml-2.5">
          <Svg w={16} h={16}><path d="M8 8a1.500 1.500 0 1 1 1.500 1.500A3.500 3.500 0 1 1 11.500 6 5.500 5.500 0 1 1 5 3M14 4A7 7 0 1 1 8 1" stroke="currentColor" strokeWidth="1.200" /></Svg>
        </button>
      </div>
    </footer>
  );
}

export default function App() {
  return (
    <div className={`flex h-screen flex-col overflow-hidden bg-white antialiased ${SEG}`}>
      <Ribbon />
      <div className="flex min-h-0 flex-1">
        <LeftSide />
        <main className="flex min-w-0 flex-1 flex-col">
          <TitleBar />
          <div className="flex min-h-0 flex-1">
            <ToolStrip />
            <div className="flex min-w-0 flex-1 flex-col">
              <div className="flex h-[34px] items-center border-b border-[#dfe2e5] bg-white pr-[9px] pl-3.5">
                <Svg w={8} h={12}><path d="M0 0H3V3H0ZM5 0H8V3H5ZM0 4.500H3V7.500H0ZM5 4.500H8V7.500H5ZM0 9H3V12H0ZM5 9H8V12H5Z" fill="#4a8cc4" /></Svg>
                <label htmlFor="region" className="ml-[11px] w-[125px] pt-1 text-xs text-[#4a5560]">Region</label>
                <div className="relative h-5 w-[397px] border-b border-[#3f9fc4]">
                  <select id="region" defaultValue="south" className="block h-4 w-full appearance-none bg-transparent pl-[3px] font-['Liberation_Sans',sans-serif] text-[13px] leading-4 font-bold text-[#1a2026]">
                    <option>south</option>
                    <option>north</option>
                  </select>
                  <Chev d="down" className="pointer-events-none absolute top-[3px] right-2 text-[#3fabdb]" />
                </div>
                <span className="ml-auto"><FilterCheck /></span>
                <button aria-label="Region menu" className="ml-2.5"><Kebab /></button>
              </div>
              <div className="flex min-h-0 flex-1">
                <Sheet />
                <aside className="w-[180px] shrink-0 bg-white">
                  <ParamSlider name="Target Scaler" min={95} max={105} value={100} ticks={11} />
                  <ParamSlider name="Renewables" min={15} max={100} value={41} ticks={21} trail />
                </aside>
              </div>
            </div>
          </div>
          <Solver />
        </main>
        <div className="flex w-[33px] shrink-0 flex-col border-l-[3px] border-[#d1d5d8] bg-[#f1f1f1]">
          <RailButton label="Formatting Panel" className="h-[140px] border-b-[3px] border-[#d1d5d8]" />
          <RailButton label="Drop Zones" className="" />
        </div>
      </div>
      <Footer />
    </div>
  );
}
